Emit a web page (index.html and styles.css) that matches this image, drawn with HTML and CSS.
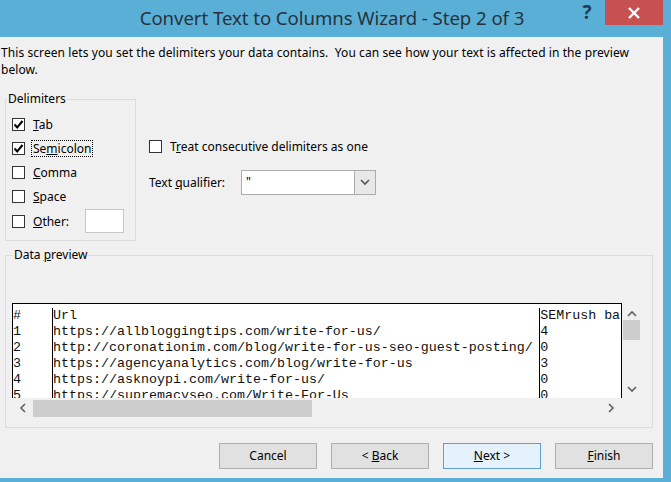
FILE: index.html
```html
<!DOCTYPE html>
<html>
<head>
<meta charset="utf-8">
<link rel="stylesheet" href="styles.css">
</head>
<body>
<div class="window">
  <div class="titlebar">
    <div class="title">Convert Text to Columns Wizard - Step 2 of 3</div>
    <div class="help">?</div>
    <div class="close"><svg width="14" height="12" viewBox="0 0 14 12"><path d="M2 1 L12 11 M12 1 L2 11" stroke="#fff" stroke-width="2.4" fill="none"/></svg></div>
  </div>
  <div class="body">
    <p class="intro">This screen lets you set the delimiters your data contains.&nbsp; You can see how your text is affected in the preview<br>below.</p>
    <div class="options">
      <fieldset class="group delims">
        <legend>Delimiters</legend>
        <div class="check"><span class="box"><svg width="13" height="13" viewBox="0 0 13 13"><path d="M2.5 6.5 L5.2 9.5 L10.5 3" stroke="#000" stroke-width="2" fill="none"/></svg></span><span class="lbl"><u>T</u>ab</span></div>
        <div class="check"><span class="box"><svg width="13" height="13" viewBox="0 0 13 13"><path d="M2.5 6.5 L5.2 9.5 L10.5 3" stroke="#000" stroke-width="2" fill="none"/></svg></span><span class="lbl focus">Se<u>m</u>icolon</span></div>
        <div class="check"><span class="box"></span><span class="lbl"><u>C</u>omma</span></div>
        <div class="check"><span class="box"></span><span class="lbl"><u>S</u>pace</span></div>
        <div class="check other"><span class="box"></span><span class="lbl"><u>O</u>ther:</span><span class="otherbox"></span></div>
      </fieldset>
      <div class="side">
        <div class="check"><span class="box"></span><span class="lbl">T<u>r</u>eat consecutive delimiters as one</span></div>
        <div class="qualifier">
          <span class="qlabel">Text <u>q</u>ualifier:</span>
          <div class="combo"><span class="cval">"</span><span class="drop"><svg width="10" height="7" viewBox="0 0 10 7"><path d="M1 1 L5 5 L9 1" stroke="#555" stroke-width="1.6" fill="none"/></svg></span></div>
        </div>
      </div>
    </div>
    <fieldset class="group preview">
      <legend>Data <u>p</u>review</legend>
      <div class="gridarea">
        <div class="gridrow">
          <div class="grid">
            <div class="col c1">#<br>1<br>2<br>3<br>4<br>5</div>
            <div class="col c2">Url<br>https://allbloggingtips.com/write-for-us/<br>http://coronationim.com/blog/write-for-us-seo-guest-posting/<br>https://agencyanalytics.com/blog/write-for-us<br>https://asknoypi.com/write-for-us/<br>https://supremacyseo.com/Write-For-Us</div>
            <div class="col c3">SEMrush ba<br>4<br>0<br>3<br>0<br>0</div>
          </div>
          <div class="vscroll">
            <svg class="up" width="10" height="7" viewBox="0 0 10 7"><path d="M1 6 L5 2 L9 6" stroke="#606060" stroke-width="1.6" fill="none"/></svg>
            <div class="vthumb"></div>
            <svg class="down" width="10" height="7" viewBox="0 0 10 7"><path d="M1 1 L5 5 L9 1" stroke="#606060" stroke-width="1.6" fill="none"/></svg>
          </div>
        </div>
        <div class="hscroll">
          <svg width="7" height="10" viewBox="0 0 7 10"><path d="M6 1 L2 5 L6 9" stroke="#606060" stroke-width="1.6" fill="none"/></svg>
          <div class="hthumb"></div>
          <div class="hspace"></div>
          <svg width="7" height="10" viewBox="0 0 7 10"><path d="M1 1 L5 5 L1 9" stroke="#606060" stroke-width="1.6" fill="none"/></svg>
        </div>
      </div>
    </fieldset>
    <div class="buttons">
      <div class="btn">Cancel</div>
      <div class="btn">&lt; <u>B</u>ack</div>
      <div class="btn default"><u>N</u>ext &gt;</div>
      <div class="btn"><u>F</u>inish</div>
    </div>
  </div>
</div>
</body>
</html>
```
FILE: styles.css
```css
html, body {
  margin: 0;
  padding: 0;
}
body {
  width: 671px;
  height: 482px;
  overflow: hidden;
  font-family: "Noto Sans", "Open Sans", sans-serif;
  font-size: 12px;
  color: #000;
}
.window {
  width: 671px;
  height: 482px;
  background: #5aafd6;
  box-sizing: border-box;
  padding: 0 8px 4px 0;
  display: flex;
  flex-direction: column;
}
.titlebar {
  height: 37px;
  display: flex;
  align-items: flex-start;
  flex: none;
}
.title {
  flex: 1;
  text-align: center;
  font-size: 18.6px;
  line-height: 36px;
  color: #26333c;
  padding-left: 88px;
  letter-spacing: -0.05px;
}
.help {
  width: 22px;
  font-size: 19px;
  font-weight: bold;
  color: #1f3a55;
  line-height: 24px;
  margin-right: 7px;
  text-align: center;
}
.close {
  width: 58px;
  height: 25px;
  background: #c75050;
  display: flex;
  align-items: center;
  justify-content: center;
}
.body {
  flex: 1;
  background: #f0f0f0;
  padding-top: 7px;
  box-sizing: border-box;
  display: flex;
  flex-direction: column;
  border-top: 1px solid #f7f7f7;
}
.intro {
  margin: -1px 0 0 1px;
  line-height: 17px;
  white-space: nowrap;
  letter-spacing: 0.08px;
}
.options {
  display: flex;
  align-items: flex-start;
  margin-top: 13px;
}
.group {
  border: 1px solid #dcdcdc;
  margin: 0 0 0 5px;
  padding: 0;
  min-width: 0;
}
.group legend {
  padding: 0 1px;
  margin-left: 1px;
  line-height: 16px;
}
.delims {
  width: 129px;
  height: 143px;
  box-sizing: content-box;
  padding: 5px 0 0 0;
}
.delims .check {
  margin-left: 6px;
}
.check {
  display: flex;
  align-items: center;
  height: 24px;
}
.box {
  width: 13px;
  height: 13px;
  box-sizing: border-box;
  border: 1px solid #333;
  background: #fff;
  display: flex;
  align-items: center;
  justify-content: center;
  flex: none;
}
.box svg {
  flex: none;
}
.lbl {
  margin-left: 6px;
  line-height: 15px;
  padding: 0 1px;
  border: 1px dotted transparent;
}
.lbl.focus {
  border-color: #000;
}
.other {
  margin-top: 1px;
}
.otherbox {
  width: 39px;
  height: 24px;
  box-sizing: border-box;
  border: 1px solid #c8c8c8;
  background: #fff;
  margin-left: 14px;
}
.side {
  margin-left: 13px;
  padding-top: 45px;
  display: flex;
  flex-direction: column;
}
.side .check {
  height: 20px;
}
.side .lbl {
  margin-left: 6px;
}
.qualifier {
  display: flex;
  align-items: center;
  margin-top: 14px;
}
.qlabel {
  width: 92px;
}
.combo {
  width: 135px;
  height: 25px;
  box-sizing: border-box;
  border: 1px solid #acacac;
  background: #fff;
  display: flex;
  align-items: stretch;
}
.cval {
  flex: 1;
  padding-left: 4px;
  line-height: 21px;
}
.drop {
  width: 20px;
  background: #e8e8e8;
  border-left: 1px solid #acacac;
  display: flex;
  align-items: center;
  justify-content: center;
}
.preview {
  margin-top: 6px;
  width: 648px;
  box-sizing: border-box;
  padding: 0 0 9px 6px;
}
.gridarea {
  margin-top: 40px;
  width: 629px;
}
.gridrow {
  display: flex;
  height: 95px;
}
.grid {
  width: 610px;
  box-sizing: border-box;
  border: 1px solid #000;
  border-bottom: none;
  background: #fff;
  display: flex;
  overflow: hidden;
  padding-top: 4px;
}
.col {
  font-family: "Liberation Mono", "Courier New", monospace;
  font-size: 13.33px;
  line-height: 16px;
  white-space: nowrap;
  overflow: hidden;
  color: #111;
}
.c1 {
  width: 39px;
}
.c2 {
  width: 487px;
  border-left: 1px solid #000;
}
.c3 {
  width: 81px;
  border-left: 1px solid #000;
}
.vscroll {
  width: 19px;
  display: flex;
  flex-direction: column;
  align-items: center;
}
.vscroll .up {
  margin-top: 7px;
}
.vthumb {
  width: 17px;
  height: 20px;
  background: #cdcdcd;
  margin-top: 3px;
}
.vscroll .down {
  margin-top: auto;
  margin-bottom: 5px;
}
.hscroll {
  width: 610px;
  height: 20px;
  display: flex;
  align-items: center;
  padding-left: 7px;
  padding-right: 7px;
  box-sizing: border-box;
}
.hthumb {
  width: 279px;
  height: 17px;
  background: #cdcdcd;
  margin-left: 7px;
}
.hspace {
  flex: 1;
}
.buttons {
  display: flex;
  justify-content: flex-end;
  gap: 14px;
  margin-top: 15px;
  padding-right: 10px;
}
.btn {
  width: 98px;
  height: 26px;
  box-sizing: border-box;
  border: 1px solid #adadad;
  background: #e1e1e1;
  text-align: center;
  line-height: 24px;
}
.btn.default {
  border-color: #5e9fd6;
  background: #e5f1fb;
}
```
